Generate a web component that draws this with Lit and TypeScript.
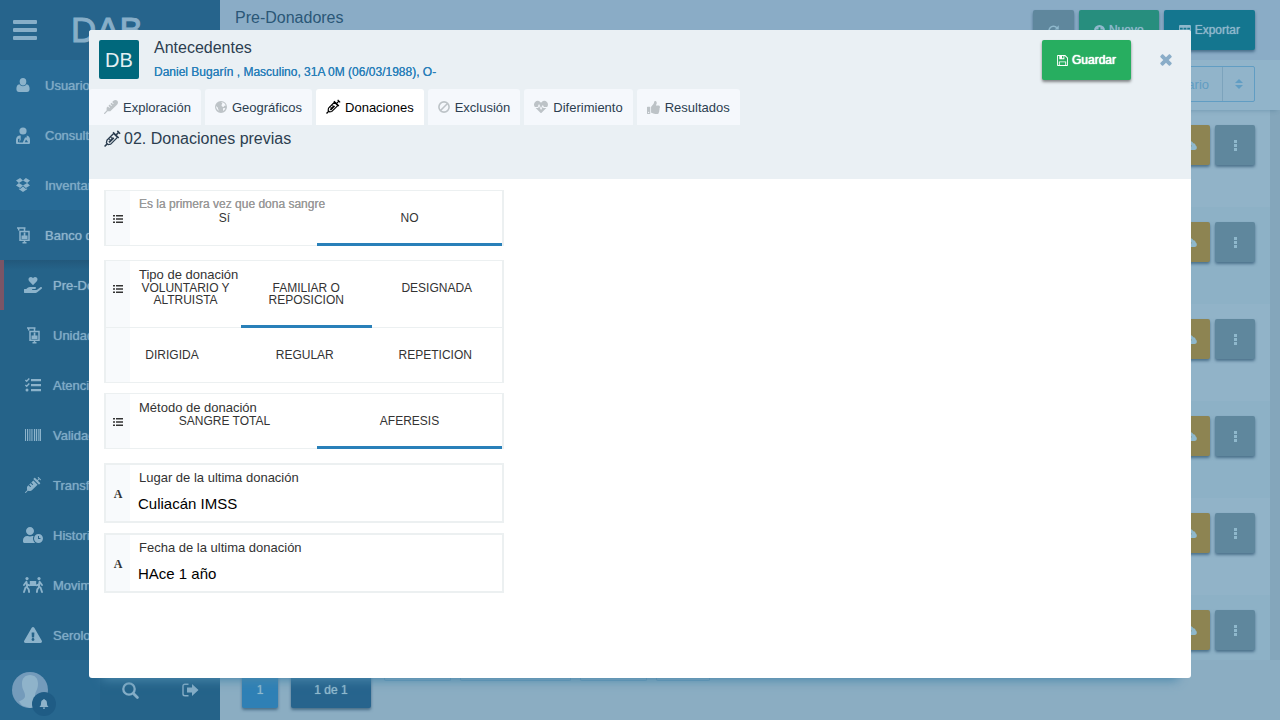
import { LitElement, html, css, svg, nothing } from "lit";
import { customElement, property, state } from "lit/decorators.js";
import { classMap } from "lit/directives/class-map.js";

/* ---------- icon set ---------- */

const shapes: Record<string, { box: string; art: unknown }> = {
  bars: {
    box: "0 0 24 20",
    art: svg`<path d="M1 0h22a1 1 0 0 1 1 1v2a1 1 0 0 1-1 1H1a1 1 0 0 1-1-1V1a1 1 0 0 1 1-1zm0 8h22a1 1 0 0 1 1 1v2a1 1 0 0 1-1 1H1a1 1 0 0 1-1-1V9a1 1 0 0 1 1-1zm0 8h22a1 1 0 0 1 1 1v2a1 1 0 0 1-1 1H1a1 1 0 0 1-1-1v-2a1 1 0 0 1 1-1z"/>`,
  },
  user: {
    box: "0 0 14 14",
    art: svg`<ellipse cx="7" cy="3.7" rx="3.3" ry="3.7"/><path d="M3.4 6.2C1.2 6.3.4 8.6.4 11c0 1.800 1 3 2.600 3h8c1.600 0 2.600-1.200 2.600-3 0-2.400-.8-4.700-3-4.800C9.700 7.300 8.500 8.200 7 8.200S4.300 7.300 3.400 6.200z"/>`,
  },
  doctor: {
    box: "0 0 14 17",
    art: svg`<circle cx="7" cy="4" r="3.600"/><path fill-rule="evenodd" d="M3.500 8.500h1.200v4.200l-1.400 2.800h3.500L9 10.500h1.700v-2C13 9 14 10.600 14 13v2.500c0 1-.6 1.500-1.500 1.500h-11C.6 17 0 16.500 0 15.500V13c0-2.300 1.100-4 3.500-4.500zM2 12v3.200h1.500V11.500zM10 12.500L8.800 15.300h3.400z"/>`,
  },
  dropbox: {
    box: "0 0 14 14",
    art: svg`<path d="M4.100 0L7 2.400 2.900 5 0 2.600zM9.900 0L14 2.600 11.100 5 7 2.400zM0 7.500L2.900 5 7 7.600 4.100 10zM14 7.500L9.900 10 7 7.600 11.100 5zM2.900 10.200l1.200.8L7 8.500l2.900 2.500 1.200-.8v1L7 14l-4.100-2.800z"/>`,
  },
  bag: {
    box: "0 0 14 17",
    art: svg`<path fill="none" stroke="currentColor" stroke-width="1.500" d="M1 1h8.500M8.500 1v3M4 4.500h9v8.700H4zM2.700 1v2.500M8.500 13.500V16M6.500 15.800h4"/><path d="M5.500 8.500h6v3.500h-6zM7.700 5.500h1.700v3.500H7.700z"/>`,
  },
  heartHand: {
    box: "0 0 576 512",
    art: svg`<path d="M275.300 250.500c7 7.400 18.400 7.400 25.500 0l108.900-114.200c31.600-33.200 29.800-88.200-5.600-118.800-30.800-26.700-76.700-21.900-104.900 7.700L288 36.900l-11.100-11.600C248.700-4.400 202.800-9.200 172 17.500c-35.300 30.600-37.200 85.600-5.600 118.800l108.900 114.200zm290 77.600c-11.800-10.700-30.200-10-42.600 0L430.300 402c-11.300 9.100-25.400 14-40 14H272c-8.800 0-16-7.200-16-16s7.200-16 16-16h78.300c15.900 0 30.700-10.900 33.300-26.600 3.300-20-12.100-37.400-31.600-37.400H192c-27 0-53.100 9.300-74.100 26.300L71.400 384H16c-8.800 0-16 7.200-16 16v96c0 8.800 7.200 16 16 16h356.800c14.500 0 28.600-4.900 40-14L564 377c15.200-12.100 16.400-35.300 1.300-48.900z"/>`,
  },
  tasks: {
    box: "0 0 16 14",
    art: svg`<path d="M6 1h10v2.200H6zM6 6h10v2.200H6zM6 11h10v2.200H6z"/><circle cx="2" cy="12.100" r="1.500"/><path fill="none" stroke="currentColor" stroke-width="1.400" d="M.4 2l1.300 1.300L4.300.6M.4 7l1.300 1.300 2.600-2.700"/>`,
  },
  barcode: {
    box: "0 0 16 12",
    art: svg`<path d="M0 0h1v12H0zM2 0h1.200v12H2zM4 0h.600v12H4zM5.600 0h1v12h-1zM7.500 0h.600v12h-.600zM9 0h1.200v12H9zM11 0h1.200v12H11zM13 0h.700v12H13zM14.500 0H16v12h-1.500z"/>`,
  },
  syringe: {
    box: "0 0 512 512",
    art: svg`<path d="M201.500 174.800l55.700 55.800c3.100 3.100 3.100 8.200 0 11.300l-11.300 11.300c-3.100 3.100-8.200 3.100-11.300 0l-55.700-55.800-45.300 45.300 55.800 55.800c3.100 3.100 3.100 8.200 0 11.300l-11.300 11.300c-3.100 3.100-8.200 3.100-11.300 0L111 265.200l-26.400 26.400c-17.300 17.300-25.600 41.100-23 65.400l7.100 63.600L2.300 487c-3.100 3.100-3.100 8.200 0 11.300l11.300 11.300c3.100 3.100 8.200 3.100 11.300 0l66.300-66.300 63.600 7.100c23.900 2.600 47.900-5.400 65.400-23l181.900-181.900-135.700-135.700-64.900 65zm308.200-93.300L430.500 2.300c-3.100-3.100-8.200-3.100-11.300 0l-11.300 11.300c-3.100 3.100-3.100 8.200 0 11.300l28.300 28.300-45.300 45.300-56.600-56.600-17-17c-3.100-3.100-8.200-3.100-11.300 0l-33.900 33.900c-3.100 3.100-3.100 8.200 0 11.300l17 17L424.800 223l17 17c3.100 3.100 8.200 3.100 11.300 0l33.900-34c3.100-3.100 3.100-8.200 0-11.300l-73.500-73.500 45.300-45.300 28.300 28.300c3.100 3.100 8.200 3.100 11.300 0l11.300-11.300c3.100-3.200 3.100-8.200 0-11.400z"/>`,
  },
  syringeLine: {
    box: "0 0 16 16",
    art: svg`<g transform="rotate(-45 8 8)" fill="none" stroke="currentColor"><path stroke-width="1.500" d="M-2.500 8H1.500M13.500 8H17.500M17.500 6v4M13.500 4v8"/><path stroke-width="1.300" stroke-linejoin="round" d="M3.500 5.300H13v5.400H3.500L1.300 9.200V6.800z"/><path stroke-width="2" d="M3.500 8.300h6.500"/><path stroke-width="1" d="M6 5.300v3M8.500 5.300v3"/></g>`,
  },
  thermometer: {
    box: "0 0 512 512",
    art: svg`<path d="M476.800 20.400c-37.500-30.700-95.500-26.300-131.900 10.200l-45.700 46 50.500 50.500c3.100 3.100 3.100 8.200 0 11.300l-11.300 11.300c-3.100 3.100-8.200 3.100-11.300 0l-50.400-50.500-45.100 45.400 50.300 50.400c3.100 3.100 3.100 8.200 0 11.300l-11.300 11.300c-3.100 3.100-8.200 3.100-11.300 0L209 167.400l-45.100 45.400L214 263c3.100 3.100 3.100 8.200 0 11.300l-11.300 11.300c-3.100 3.100-8.200 3.100-11.300 0l-50.100-50.200L96 281.100V382L7 471c-9.400 9.400-9.400 24.600 0 33.900 9.400 9.400 24.600 9.400 33.900 0l89-89h99.900L484 162.600c34.900-34.900 42.200-101.500-7.200-142.200z"/>`,
  },
  userClock: {
    box: "0 0 640 512",
    art: svg`<path d="M496 224c-79.600 0-144 64.400-144 144s64.400 144 144 144 144-64.400 144-144-64.400-144-144-144zm64 150.300c0 5.300-4.400 9.700-9.700 9.700h-60.600c-5.300 0-9.700-4.400-9.700-9.700v-76.600c0-5.300 4.400-9.700 9.700-9.700h12.600c5.300 0 9.700 4.400 9.700 9.700V352h38.300c5.300 0 9.700 4.400 9.700 9.700v12.600zM320 368c0-27.800 6.700-54.100 18.200-77.500-8-1.500-16.200-2.500-24.600-2.500h-16.700c-22.200 10.200-46.900 16-72.900 16s-50.600-5.800-72.900-16h-16.700C60.200 288 0 348.200 0 422.400V464c0 26.500 21.500 48 48 48h347.100c-45.300-31.900-75.100-84.500-75.100-144zm-96-112c70.700 0 128-57.300 128-128S294.700 0 224 0 96 57.300 96 128s57.300 128 128 128z"/>`,
  },
  carry: {
    box: "0 0 20 16",
    art: svg`<circle cx="4" cy="1.600" r="1.600"/><circle cx="16" cy="1.600" r="1.600"/><path d="M6.800 4h6.400v5H6.800z"/><path fill="none" stroke="currentColor" stroke-width="1.900" stroke-linejoin="round" stroke-linecap="round" d="M6.500 8.300L4 7.500 3.400 4.800 1 8M3.800 8l.4 2.500 1.500 1.800.4 2.700M2.500 10.500L1 15M13.500 8.300l2.500-.8.600-2.700L19 8M16.200 8l-.4 2.500-1.500 1.800-.4 2.700M17.500 10.500L19 15"/>`,
  },
  warning: {
    box: "0 0 576 512",
    art: svg`<path d="M569.500 440C588 472 564.800 512 527.900 512H48.100c-37 0-60-40-41.600-72L246.400 24c18.500-32 64.700-32 83.200 0l239.900 416zM288 354c-25.400 0-46 20.600-46 46s20.600 46 46 46 46-20.600 46-46-20.600-46-46-46zm-43.700-165.300l7.400 136c.4 6.300 5.700 11.300 12 11.300h48.600c6.300 0 11.600-5 12-11.300l7.400-136c.4-6.900-5.100-12.700-12-12.700h-63.400c-6.900 0-12.400 5.800-12 12.700z"/>`,
  },
  search: {
    box: "0 0 17 17",
    art: svg`<g fill="none" stroke="currentColor" stroke-linecap="round"><circle cx="7" cy="7" r="5.700" stroke-width="2.300"/><path stroke-width="2.800" d="M11.700 11.700l3.700 3.700"/></g>`,
  },
  signOut: {
    box: "0 0 17 14",
    art: svg`<path fill="none" stroke="currentColor" stroke-width="1.400" d="M6.500 1.200H3C1.700 1.200 1 2 1 3v8c0 1 .7 1.800 2 1.800h3.500"/><path d="M10 1l6.500 6-6.500 6V9.500H5v-5h5z"/>`,
  },
  bell: {
    box: "0 0 12 12",
    art: svg`<path d="M6 0c.6 0 1 .4 1 1 1.700.4 2.500 1.800 2.500 3.500 0 3 .8 4 2 5.200H.5c1.200-1.200 2-2.200 2-5.200C2.500 2.800 3.300 1.400 5 1c0-.6.4-1 1-1zM4.600 10.300h2.800C7.400 11.300 6.800 12 6 12s-1.400-.7-1.400-1.700z"/>`,
  },
  refresh: {
    box: "0 0 12 12",
    art: svg`<path fill="none" stroke="currentColor" stroke-width="1.700" d="M10.300 8A4.800 4.800 0 1 1 9.600 3"/><path d="M11.700.4v4.400H7.300z"/>`,
  },
  plus: {
    box: "0 0 12 12",
    art: svg`<path fill-rule="evenodd" d="M6 0a6 6 0 1 1 0 12A6 6 0 0 1 6 0zM5 2.500V5H2.500v2H5v2.500h2V7h2.500V5H7V2.500z"/>`,
  },
  table: {
    box: "0 0 13 12",
    art: svg`<path fill-rule="evenodd" d="M1 0h11a1 1 0 0 1 1 1v10a1 1 0 0 1-1 1H1a1 1 0 0 1-1-1V1a1 1 0 0 1 1-1zM1 3v2h3V3zm4 0v2h3V3zm4 0v2h3V3zM1 6v2h3V6zm4 0v2h3V6zm4 0v2h3V6zM1 9v2h3V9zm4 0v2h3V9zm4 0v2h3V9z"/>`,
  },
  sort: { box: "0 0 8 10", art: svg`<path d="M4 0l4 4H0zM0 6h8l-4 4z"/>` },
  dots: { box: "0 0 3 11", art: svg`<path d="M0 0h3v3H0zM0 4h3v3H0zM0 8h3v3H0z"/>` },
  cloud: {
    box: "0 0 14 10",
    art: svg`<path fill-rule="evenodd" d="M3 10C1.200 10 0 8.700 0 7.200 0 6 .7 5 1.900 4.600 1.900 2 3.700 0 6.200 0c2 0 3.500 1.200 4 2.500 1.500 0 2.400.9 2.400 2.300C13.600 5.300 14 6.300 14 7.500 14 9 12.900 10 11.500 10zM6.500 3.500L4.200 5.800h1.500v2.400h1.600V5.800h1.500z"/>`,
  },
  save: {
    box: "0 0 12 12",
    art: svg`<path fill-rule="evenodd" d="M1 0h8l3 3v8a1 1 0 0 1-1 1H1a1 1 0 0 1-1-1V1a1 1 0 0 1 1-1zm0 1v10h1V7h8v4h1V3.500L8.500 1H8v3.500H2.500V1zm4.500 0v2.500H7V1zM3 8v3h6V8z"/>`,
  },
  close: {
    box: "0 0 12 12",
    art: svg`<path d="M3.200.5L6 3.300 8.800.5c.4-.4.900-.4 1.300 0l1.400 1.400c.4.4.4.900 0 1.300L8.700 6l2.800 2.800c.4.400.4.900 0 1.300l-1.400 1.400c-.4.400-.9.400-1.300 0L6 8.700l-2.800 2.800c-.4.400-.9.400-1.300 0L.5 10.100c-.4-.4-.4-.9 0-1.300L3.300 6 .5 3.200c-.4-.4-.4-.9 0-1.300L1.900.5c.4-.4.900-.4 1.300 0z"/>`,
  },
  globe: {
    box: "0 0 12 12",
    art: svg`<path fill-rule="evenodd" d="M6 0a6 6 0 1 1 0 12A6 6 0 0 1 6 0zM6.200 1.200l2 .3 1.600 1.300 1 1.700-1.300.2-1 1.200L7 5.400l-.6-1.500 1-1.100zM8 7.200l2.300-.3-.7 1.800-1.500 1.200zM1.200 5l1.500 1.500.5 1.700 1 1.500-1.500-.8L1.300 7z"/>`,
  },
  ban: {
    box: "0 0 12 12",
    art: svg`<g fill="none" stroke="currentColor" stroke-width="1.600"><circle cx="6" cy="6" r="5.100"/><path d="M2.500 9.500l7-7"/></g>`,
  },
  heartbeat: {
    box: "0 32 512 448",
    art: svg`<path d="M320.200 243.800l-49.700 99.400c-6 12.100-23.400 11.700-28.900-.6l-56.900-126.300-30 71.700H60.600l182.500 186.500c7.100 7.300 18.600 7.300 25.700 0L451.400 288H342.300l-22.100-44.200zM473.700 73.900l-2.400-2.500c-51.500-52.600-135.800-52.600-187.400 0L256 100l-27.900-28.500c-51.500-52.700-135.900-52.700-187.400 0l-2.400 2.400C-10.400 123.700-12.500 203 31 256h102.400l35.900-86.200c5.400-12.900 23.600-13.100 29.400-.4l58.200 129.300 49-97.900c5.900-11.800 22.700-11.800 28.600 0l27.600 55.200H481c43.500-53 41.400-132.300-7.300-182.100z"/>`,
  },
  thumb: {
    box: "0 0 512 512",
    art: svg`<path d="M104 224H24c-13.300 0-24 10.700-24 24v240c0 13.300 10.700 24 24 24h80c13.300 0 24-10.700 24-24V248c0-13.300-10.700-24-24-24zM64 472c-13.300 0-24-10.700-24-24s10.700-24 24-24 24 10.700 24 24-10.700 24-24 24zM384 81.500c0 42.400-26 66.200-33.300 94.500h101.700c33.400 0 59.400 27.700 59.600 58.100.1 17.900-7.500 37.200-19.400 49.200l-.1.100c9.800 23.300 8.200 56-9.300 79.500 8.700 25.900-.1 57.700-16.400 74.800 4.300 17.600 2.200 32.500-6.100 44.600C440.200 511.600 389.600 512 346.800 512H344c-48.300 0-87.800-17.600-119.600-31.700-16-7.100-36.800-15.900-52.600-16.200-6.500-.1-11.800-5.500-11.800-12V238.300c0-3.200 1.300-6.300 3.600-8.500 39.600-39.100 56.600-80.600 89.100-113.100 14.800-14.800 20.200-37.200 25.400-58.900C282.500 39.300 291.800 0 312 0c24 0 72 8 72 81.500z"/>`,
  },
  list: {
    box: "0 0 10 8",
    art: svg`<path d="M0 0h2v1.600H0zM3 0h7v1.600H3zM0 3.200h2v1.600H0zM3 3.200h7v1.600H3zM0 6.400h2V8H0zM3 6.400h7V8H3z"/>`,
  },
  face: {
    box: "0 0 36 36",
    art: svg`<path d="M18 3c5 0 8 3.500 8 8.500 0 3-.6 5-1.500 7-.8 1.700-1.500 3-1.500 5.500 0 2 1.500 3.500 6 5.500l-3 4-8 2.500-8-2.500-3-4c4.500-2 6-3.500 6-5.500 0-2.500-.7-3.800-1.500-5.500-.9-2-1.500-4-1.500-7C10 6.500 13 3 18 3z"/>`,
  },
};

@customElement("ui-icon")
export class UiIcon extends LitElement {
  static styles = css`
    :host { display: inline-flex; flex: none; }
    svg { display: block; fill: currentColor; overflow: visible; }
  `;
  @property() name = "";
  @property({ type: Number }) width = 12;
  @property({ type: Number }) height = 12;

  render() {
    const shape = shapes[this.name];
    if (!shape) return nothing;
    return html`<svg width=${this.width} height=${this.height} viewBox=${shape.box} aria-hidden="true">${shape.art}</svg>`;
  }
}

const icon = (name: string, width = 12, height = width) =>
  html`<ui-icon name=${name} .width=${width} .height=${height}></ui-icon>`;

/* ---------- sidebar ---------- */

type Entry = { label: string; icon: string; w: number; h: number };

const topLevel: Entry[] = [
  { label: "Usuarios", icon: "user", w: 14, h: 14 },
  { label: "Consultas", icon: "doctor", w: 14, h: 17 },
  { label: "Inventario", icon: "dropbox", w: 14, h: 14 },
];

const bankItems: Entry[] = [
  { label: "Pre-Donadores", icon: "heartHand", w: 18, h: 16 },
  { label: "Unidades", icon: "bag", w: 14, h: 17 },
  { label: "Atenciones", icon: "tasks", w: 16, h: 14 },
  { label: "Validación", icon: "barcode", w: 16, h: 12 },
  { label: "Transfer", icon: "syringe", w: 16, h: 16 },
  { label: "Historial", icon: "userClock", w: 20, h: 16 },
  { label: "Movimientos", icon: "carry", w: 20, h: 16 },
  { label: "Serología", icon: "warning", w: 18, h: 16 },
];

@customElement("side-bar")
export class SideBar extends LitElement {
  static styles = css`
    :host {
      display: flex;
      flex-direction: column;
      flex: none;
      width: 220px;
      background: #256389;
      color: #7fabc6;
    }
    .brand {
      display: flex;
      align-items: center;
      gap: 34px;
      height: 60px;
      padding-left: 13px;
      background: #26648c;
      color: #87aec8;
    }
    .plain {
      border: 0;
      padding: 0;
      background: none;
      color: inherit;
      display: flex;
    }
    .logo {
      font-size: 35px;
      line-height: 60px;
      -webkit-text-stroke: 1px currentColor;
    }
    .item {
      display: flex;
      align-items: center;
      gap: 9px;
      height: 50px;
      padding-left: 10px;
      box-sizing: border-box;
      background: #286b96;
      color: inherit;
      font-size: 13px;
      text-decoration: none;
      white-space: nowrap;
      text-shadow: 0 0 1px currentColor;
    }
    .glyph {
      display: flex;
      justify-content: center;
      width: 26px;
      color: #8cb3cb;
    }
    .open { background: #26658d; color: #8db4cc; }
    .sub {
      flex: 1;
      background: linear-gradient(#22587b, #256389 10px);
    }
    .sub .item {
      gap: 7px;
      padding-left: 16px;
      border-left: 4px solid transparent;
      background: none;
    }
    .sub .current {
      border-left-color: #7b5566;
      color: #8db4cc;
    }
    .foot { display: flex; height: 60px; }
    .me {
      display: flex;
      align-items: center;
      width: 100px;
      padding-left: 12px;
      box-sizing: border-box;
      background: #27678f;
    }
    .portrait {
      position: relative;
      display: flex;
      width: 36px;
      height: 36px;
      border-radius: 50%;
      background: #749bbb;
      color: #8fb3ca;
    }
    .alert {
      position: absolute;
      left: 20px;
      top: 20px;
      display: flex;
      align-items: center;
      justify-content: center;
      width: 24px;
      height: 24px;
      border-radius: 50%;
      background: #1f5c85;
    }
    .tools {
      flex: 1;
      display: flex;
      align-items: center;
      justify-content: space-around;
      color: #85adc6;
    }
  `;

  render() {
    return html`
      <div class="brand">
        <button class="plain" aria-label="Menú">${icon("bars", 24, 20)}</button>
        <span class="logo">DAB</span>
      </div>
      ${topLevel.map((e) => this.item(e, ""))}
      ${this.item({ label: "Banco de sangre", icon: "bag", w: 14, h: 17 }, "open")}
      <nav class="sub">${bankItems.map((e, i) => this.item(e, i === 0 ? "current" : ""))}</nav>
      <div class="foot">
        <div class="me">
          <div class="portrait">${icon("face", 36)}<span class="alert">${icon("bell", 10)}</span></div>
        </div>
        <div class="tools">
          <button class="plain" aria-label="Buscar">${icon("search", 17)}</button>
          <button class="plain" aria-label="Salir">${icon("signOut", 17, 14)}</button>
        </div>
      </div>
    `;
  }

  private item(e: Entry, extra: string) {
    return html`<a href="#" class="item ${extra}"><span class="glyph">${icon(e.icon, e.w, e.h)}</span>${e.label}</a>`;
  }
}

/* ---------- donor list ---------- */

@customElement("donor-list")
export class DonorList extends LitElement {
  static styles = css`
    :host {
      display: flex;
      flex-direction: column;
      flex: 1;
      min-width: 0;
      background: #8badc2;
    }
    .bar {
      display: flex;
      justify-content: space-between;
      height: 60px;
      padding: 10px 25px 0 15px;
      box-sizing: border-box;
      background: #8aacc6;
    }
    h1 {
      margin: 0;
      font-size: 16px;
      line-height: 16px;
      font-weight: 400;
      color: #2a5777;
    }
    .actions { display: flex; gap: 5px; }
    button {
      display: flex;
      align-items: center;
      justify-content: center;
      gap: 4px;
      height: 40px;
      padding: 0 15px;
      border: 0;
      border-radius: 2px;
      color: #8fb8cc;
      font: inherit;
      font-size: 12px;
      text-shadow: 0 0 1px currentColor;
      box-shadow: 0 2px 3px rgba(30, 70, 100, 0.6);
    }
    .grey { background: #5f879d; }
    .green { background: #278e7e; }
    .teal { background: #14768f; }
    .amber { background: #8d8452; }
    .square { width: 40px; padding: 0; }
    .filters {
      position: relative;
      display: flex;
      justify-content: flex-end;
      height: 50px;
      padding: 6px 25px 8px 0;
      box-sizing: border-box;
      background: #91b4ca;
      box-shadow: 0 4px 4px -3px rgba(40, 90, 125, 0.25);
    }
    .order {
      display: flex;
      align-items: center;
      border: 1px solid #619dc3;
      border-radius: 2px;
      color: #619dc3;
    }
    select {
      appearance: none;
      width: 160px;
      height: 100%;
      padding: 0 13px 0 0;
      border: 0;
      border-right: 1px solid #7ca3bc;
      background: none;
      color: inherit;
      font: inherit;
      font-size: 13px;
      text-align: right;
      text-align-last: right;
    }
    .caret { display: flex; justify-content: center; width: 31px; }
    .scroll {
      flex: 1;
      min-height: 0;
      overflow: hidden;
      border-right: 10px solid #84a6bb;
    }
    .row {
      display: flex;
      justify-content: flex-end;
      gap: 5px;
      height: 97px;
      padding: 15px 15px 0 0;
      box-sizing: border-box;
      background: #91b3c8;
    }
    .row:nth-child(even) { background: #8db1c6; }
    .foot {
      display: flex;
      gap: 13px;
      height: 60px;
      padding: 12px 22px 0;
      box-sizing: border-box;
    }
    .foot button { height: 36px; }
    .page { width: 36px; padding: 0; background: #2f80b5; }
    .count { width: 80px; padding: 0; background: #27648d; }
    .tags { display: flex; gap: 9px; }
    .tag {
      width: 67px;
      height: 9px;
      border: 1px solid #6c9ab8;
      border-top: 0;
      border-radius: 0 0 2px 2px;
      box-sizing: border-box;
    }
    .wide { width: 111px; }
    .slim { width: 54px; }
  `;

  render() {
    return html`
      <header class="bar">
        <h1>Pre-Donadores</h1>
        <div class="actions">
          <button class="grey" aria-label="Actualizar">${icon("refresh", 11)}</button>
          <button class="green">${icon("plus", 11)}Nuevo</button>
          <button class="teal">${icon("table", 12, 11)}Exportar</button>
        </div>
      </header>
      <div class="filters">
        <div class="order">
          <select aria-label="Ordenar por"><option>Usuario</option></select>
          <span class="caret">${icon("sort", 8, 10)}</span>
        </div>
      </div>
      <div class="scroll">
        ${[0, 1, 2, 3, 4, 5].map(
          () => html`<div class="row">
            <button class="amber square" aria-label="Subir">${icon("cloud", 13, 9)}</button>
            <button class="grey square" aria-label="Opciones">${icon("dots", 3, 11)}</button>
          </div>`,
        )}
      </div>
      <footer class="foot">
        <button class="page">1</button>
        <button class="count">1 de 1</button>
        <div class="tags">
          <span class="tag"></span><span class="tag wide"></span><span class="tag"></span><span class="tag slim"></span>
        </div>
      </footer>
    `;
  }
}

/* ---------- record dialog ---------- */

const tabs = [
  { label: "Exploración", icon: "thermometer", w: 14 },
  { label: "Geográficos", icon: "globe", w: 12 },
  { label: "Donaciones", icon: "syringeLine", w: 14 },
  { label: "Exclusión", icon: "ban", w: 12 },
  { label: "Diferimiento", icon: "heartbeat", w: 14 },
  { label: "Resultados", icon: "thumb", w: 13 },
];

@customElement("record-dialog")
export class RecordDialog extends LitElement {
  static styles = css`
    :host {
      display: flex;
      flex-direction: column;
      border-radius: 3px;
      overflow: hidden;
      background: #fff;
    }
    button, input { font: inherit; }
    .head {
      flex: none;
      height: 149px;
      background: #eaf0f4;
      color: #2c3e50;
    }
    .title {
      display: flex;
      gap: 15px;
      height: 59px;
      padding: 10px 19px 0 10px;
      box-sizing: border-box;
    }
    .initials {
      width: 40px;
      height: 39px;
      border-radius: 2px;
      background: #00687c;
      color: #e4eff2;
      font-size: 20px;
      line-height: 41px;
      text-align: center;
    }
    .who { flex: 1; }
    h2, h3, p { margin: 0; font-weight: 400; }
    h2 { font-size: 16px; line-height: 16px; }
    p {
      padding-top: 9px;
      font-size: 12px;
      line-height: 14px;
      color: #2980b9;
      text-shadow: 0 0 0 currentColor;
    }
    .save {
      display: flex;
      align-items: center;
      gap: 4px;
      height: 40px;
      padding: 0 15px;
      border: 0;
      border-radius: 2px;
      background: #27ae60;
      color: #fff;
      font-size: 12px;
      text-shadow: 0 0 1px #fff, 0 0 1px #fff;
      box-shadow: 0 2px 3px rgba(0, 0, 0, 0.45);
    }
    .close {
      display: flex;
      align-items: center;
      height: 40px;
      padding: 0;
      border: 0;
      margin-left: 14px;
      background: none;
      color: #8aadc8;
    }
    .tabs { display: flex; gap: 4px; }
    .tab {
      display: flex;
      align-items: center;
      gap: 5px;
      height: 36px;
      padding: 0 10px;
      border: 0;
      border-radius: 3px 3px 0 0;
      background: #f5f8fc;
      color: #2c3e50;
      font-size: 13px;
    }
    .tab:first-child { padding-left: 15px; }
    .tab ui-icon { color: #bdc3c7; }
    .on { background: #fff; color: #000; }
    .on ui-icon { color: #000; }
    h3 {
      display: flex;
      align-items: center;
      gap: 4px;
      padding: 5px 15px;
      font-size: 16px;
      line-height: 18px;
    }
    .body {
      display: flex;
      flex-direction: column;
      align-items: flex-start;
      gap: 10px;
      padding: 11px 15px;
    }
    .field { width: 400px; max-width: 100%; min-height: 60px; }
    .card {
      display: flex;
      border: solid #ecf0f1;
      border-width: 1px 2px;
      min-height: 56px;
      box-sizing: border-box;
      color: #333;
    }
    .text { border-width: 2px; min-height: 60px; }
    .side {
      width: 24px;
      flex: none;
      background: #f8fafc;
    }
    .mark {
      display: flex;
      align-items: center;
      justify-content: center;
      height: 54px;
      padding-top: 2px;
      box-sizing: border-box;
      font-family: "Liberation Serif", serif;
      font-size: 12px;
      font-weight: 700;
    }
    .text .mark { height: 56px; }
    .tall .mark { height: 67px; padding-bottom: 12px; border-bottom: 1px solid #ecf0f1; }
    .main { flex: 1; min-width: 0; display: flex; flex-direction: column; }
    .name {
      padding: 6px 9px 0;
      font-size: 13px;
      line-height: 15px;
      white-space: nowrap;
    }
    .text .name { padding-top: 5px; }
    .soft {
      font-size: 12px;
      color: #999;
      text-shadow: 0 0 0 currentColor;
    }
    .options {
      flex: 1;
      display: grid;
      grid-template-columns: 1fr 1fr;
      padding-left: 2px;
    }
    .tall .options {
      grid-template-columns: 111px 1fr 1fr;
      grid-template-rows: 45px 55px;
      padding-left: 0;
    }
    .option {
      box-sizing: border-box;
      font-size: 12px;
      line-height: 12px;
      text-align: center;
    }
    .picked { border-bottom: 3px solid #2980b9; margin-bottom: -1px; z-index: 1; }
    .tall .option:nth-child(-n + 3) { padding: 0 8px; }
    .tall .option:nth-child(n + 4) {
      border-top: 1px solid #ecf0f1;
      padding-top: 21px;
      padding-right: 3px;
    }
    .tall .option:nth-child(4) { padding-right: 27px; }
    .option input {
      position: absolute;
      appearance: none;
      width: 0;
      height: 0;
      margin: 0;
    }
    .entry {
      flex: 1;
      width: 100%;
      padding: 0 8px;
      border: 0;
      outline: 0;
      box-sizing: border-box;
      background: none;
      color: #000;
      font-size: 15px;
    }
  `;

  @state() private tab = 2;
  @state() private picks: Record<string, string> = {
    primera: "NO",
    tipo: "FAMILIAR O REPOSICION",
    metodo: "AFERESIS",
  };

  render() {
    return html`
      <div class="head">
        <div class="title">
          <div class="initials">DB</div>
          <div class="who">
            <h2>Antecedentes</h2>
            <p>Daniel Bugarín , Masculino, 31A 0M (06/03/1988), O-</p>
          </div>
          <button class="save">${icon("save", 11)}Guardar</button>
          <button class="close" aria-label="Cerrar">${icon("close", 12)}</button>
        </div>
        <div class="tabs" role="tablist">
          ${tabs.map(
            (t, i) => html`<button
              role="tab"
              aria-selected=${i === this.tab}
              class=${classMap({ tab: true, on: i === this.tab })}
              @click=${() => (this.tab = i)}
            >${icon(t.icon, t.w)}${t.label}</button>`,
          )}
        </div>
        <h3>${icon("syringeLine", 16)}02. Donaciones previas</h3>
      </div>
      <div class="body">
        ${this.choice("primera", "Es la primera vez que dona sangre", ["Sí", "NO"], "soft")}
        ${this.choice("tipo", "Tipo de donación", [
          "VOLUNTARIO Y ALTRUISTA",
          "FAMILIAR O REPOSICION",
          "DESIGNADA",
          "DIRIGIDA",
          "REGULAR",
          "REPETICION",
        ])}
        ${this.choice("metodo", "Método de donación", ["SANGRE TOTAL", "AFERESIS"])}
        ${this.text("lugar", "Lugar de la ultima donación", "Culiacán IMSS")}
        ${this.text("fecha", "Fecha de la ultima donación", "HAce 1 año")}
      </div>
    `;
  }

  private choice(id: string, label: string, options: string[], tone = "") {
    return html`<div class="field">
      <div class=${classMap({ card: true, tall: options.length > 2 })} role="radiogroup" aria-labelledby=${id}>
        <div class="side"><div class="mark">${icon("list", 10, 8)}</div></div>
        <div class="main">
          <span class="name ${tone}" id=${id}>${label}</span>
          <div class="options">
            ${options.map(
              (o) => html`<label class=${classMap({ option: true, picked: this.picks[id] === o })}>
                <input
                  type="radio"
                  name=${id}
                  .checked=${this.picks[id] === o}
                  @change=${() => (this.picks = { ...this.picks, [id]: o })}
                />${o}
              </label>`,
            )}
          </div>
        </div>
      </div>
    </div>`;
  }

  private text(id: string, label: string, value: string) {
    return html`<div class="field">
      <div class="card text">
        <div class="side"><div class="mark">A</div></div>
        <div class="main">
          <label class="name" for=${id}>${label}</label>
          <input class="entry" id=${id} type="text" .value=${value} />
        </div>
      </div>
    </div>`;
  }
}

/* ---------- shell ---------- */

@customElement("app-root")
export class AppRoot extends LitElement {
  static styles = css`
    :host {
      position: relative;
      display: flex;
      height: 100vh;
      overflow: hidden;
      font-family: "Liberation Sans", Arial, sans-serif;
    }
    record-dialog {
      position: absolute;
      inset: 30px 89px 42px;
      z-index: 2;
    }
    .shade {
      position: absolute;
      inset: 30px 89px 42px;
      z-index: 1;
      box-shadow: 0 15px 10px -13px #4a88ac;
    }
  `;

  render() {
    return html`
      <side-bar></side-bar>
      <donor-list></donor-list>
      <div class="shade"></div>
      <record-dialog role="dialog" aria-label="Antecedentes"></record-dialog>
    `;
  }
}
